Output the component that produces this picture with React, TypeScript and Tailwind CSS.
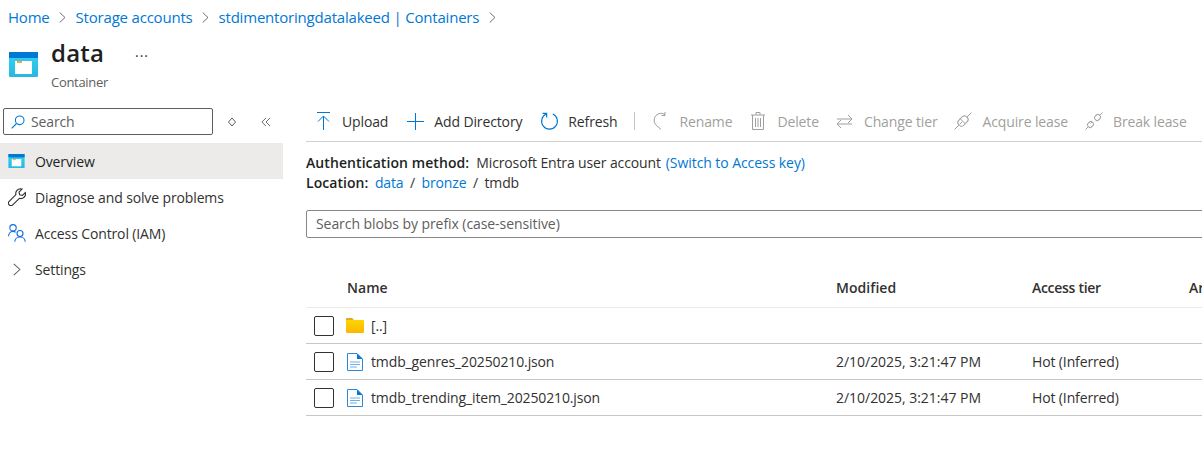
import type { ReactNode } from 'react'

const navLink = 'text-[#0078d4]'
const grey = '#a19f9d'

function ContainerIcon({ width, height, id }: { width: number; height: number; id: string }) {
  return (
    <svg width={width} height={height} viewBox="0 0 29 25" aria-hidden="true">
      <defs>
        <linearGradient id={id} x1="0" y1="0" x2="0" y2="1">
          <stop offset="0" stopColor="#32d4f5" />
          <stop offset="1" stopColor="#28b8e0" />
        </linearGradient>
      </defs>
      <rect x="0" y="0" width="29" height="25" rx="1" fill={`url(#${id})`} />
      <rect x="0" y="0" width="29" height="6" fill="#0078d4" />
      <rect x="6" y="9" width="17" height="13" fill="#ffffff" />
      <rect x="8" y="9" width="5" height="2" fill="#f7a440" />
    </svg>
  )
}

function Chevron({ width = 7, height = 11 }: { width?: number; height?: number }) {
  return (
    <svg width={width} height={height} viewBox="0 0 7 11" fill="none" stroke="#605e5c" strokeWidth="0.9" aria-hidden="true">
      <path d="M.7.5l5.300 5-5.300 5" />
    </svg>
  )
}

function WrenchIcon() {
  return (
    <svg width="18" height="18" viewBox="0 0 18 18" fill="none" stroke="#323130" strokeWidth="1.1" aria-hidden="true">
      <path d="M12.500.8a4.700 4.700 0 0 0-4.600 5.900L1.200 13.300a2.500 2.500 0 0 0 3.500 3.600l6.700-6.600a4.700 4.700 0 0 0 6-5.700l-3 2.900-2.700-.8-.7-2.600 3-3a4.700 4.700 0 0 0-1.500-.1z" />
    </svg>
  )
}

function PeopleIcon() {
  return (
    <svg width="18" height="18" viewBox="0 0 18 18" fill="none" stroke="#0f6cdf" strokeWidth="1.1" aria-hidden="true">
      <circle cx="5" cy="3.800" r="3.200" />
      <path d="M.6 12.200c0-2.600 1.800-4.800 4.400-4.800 1 0 1.900.3 2.600.8" />
      <circle cx="12" cy="9.500" r="3" />
      <path d="M6.800 17.800c0-2.700 2.200-4.800 5.200-4.800s5.200 2.100 5.200 4.800" />
    </svg>
  )
}

function ToolButton({ icon, label, disabled }: { icon: ReactNode; label: string; disabled?: boolean }) {
  return (
    <div className={`flex items-center gap-[9px] ${disabled ? 'text-[#a19f9d]' : 'text-[#323130]'}`}>
      <span className="flex h-[20px] w-[20px] items-center justify-center">{icon}</span>
      <span>{label}</span>
    </div>
  )
}

function FileIcon() {
  return (
    <svg width="16" height="18" viewBox="0 0 16 18" aria-hidden="true">
      <path d="M.5.5h9.500l5.500 5.500v11.500H.5z" fill="#ffffff" stroke="#2b88d8" />
      <path d="M10 .5l5.500 5.500H10z" fill="#0078d4" />
      <path d="M3 9h10M3 11.500h10M3 14h7" stroke="#6fb0e6" strokeWidth="1" />
    </svg>
  )
}

function FolderIcon() {
  return (
    <svg width="18" height="15" viewBox="0 0 18 15" aria-hidden="true">
      <defs>
        <linearGradient id="folderFill" x1="0" y1="0" x2="0" y2="1">
          <stop offset="0" stopColor="#ffd400" />
          <stop offset="1" stopColor="#fbb800" />
        </linearGradient>
      </defs>
      <path d="M0 1.200C0 .5.500 0 1.200 0h5l2 2.500H0z" fill="#dca92c" />
      <rect x="0" y="2" width="18" height="13" rx="1" fill="url(#folderFill)" />
    </svg>
  )
}

const rows = [
  { name: '[..]', folder: true, modified: '', tier: '' },
  { name: 'tmdb_genres_20250210.json', folder: false, modified: '2/10/2025, 3:21:47 PM', tier: 'Hot (Inferred)' },
  { name: 'tmdb_trending_item_20250210.json', folder: false, modified: '2/10/2025, 3:21:47 PM', tier: 'Hot (Inferred)' },
]

export default function App() {
  return (
    <div className="h-[462px] w-[1202px] overflow-hidden bg-white font-['Open_Sans',sans-serif] text-[14px] tracking-[-0.13px] text-[#323130]">
      {/* breadcrumb */}
      <div className="flex h-[35px] items-center gap-[9.500px] pl-[8px] text-[15px] tracking-[-0.2px]">
        <span className={navLink}>Home</span>
        <Chevron />
        <span className={navLink}>Storage accounts</span>
        <Chevron />
        <span className={navLink}>stdimentoringdatalakeed | Containers</span>
        <Chevron />
      </div>

      {/* title */}
      <div className="flex h-[61px] items-start pl-[9px]">
        <div className="mt-[17px]">
          <ContainerIcon width={29} height={25} id="containerLarge" />
        </div>
        <div className="ml-[13px]">
          <div className="text-[24px] font-semibold leading-[36px] tracking-[0.2px] text-[#201f1e]">data</div>
          <div className="text-[13px] leading-[22px] tracking-[-0.3px] text-[#605e5c]">Container</div>
        </div>
        <div className="ml-[27px] mt-[1px] text-[14px] leading-[32px] tracking-[1px] text-[#323130]">...</div>
      </div>

      <div className="flex">
        {/* sidebar */}
        <div className="w-[283px] shrink-0">
          <div className="flex h-[47px] items-start pl-[3px] pt-[12px]">
            <div className="flex h-[27px] w-[210px] items-center gap-[6px] rounded-[2px] border border-[#605e5c] pl-[7px] text-[#605e5c]">
              <svg width="14" height="14" viewBox="0 0 14 14" fill="none" stroke="#0078d4" strokeWidth="1.1" aria-hidden="true">
                <circle cx="8.700" cy="5.300" r="4.300" />
                <path d="M5.500 8.500L.7 13.300" />
              </svg>
              <span>Search</span>
            </div>
            <svg className="ml-[14px] mt-[9px]" width="10" height="10" viewBox="0 0 10 10" fill="none" stroke="#605e5c" aria-hidden="true">
              <path d="M5 1l3.500 4L5 9 1.500 5z" />
            </svg>
            <svg className="ml-[24px] mt-[9px]" width="10" height="10" viewBox="0 0 11 10" fill="none" stroke="#605e5c" aria-hidden="true">
              <path d="M5.500.5L1 5l4.500 4.500M10 .5L5.500 5l4.500 4.500" />
            </svg>
          </div>
          <div className="flex h-[36px] items-center gap-[9px] bg-[#edebe9] pl-[8px] text-[#201f1e]">
            <span className="flex w-[18px]">
              <ContainerIcon width={17} height={14} id="containerSmall" />
            </span>
            <span>Overview</span>
          </div>
          <div className="flex h-[36px] items-center gap-[9px] pl-[8px]">
            <WrenchIcon />
            <span>Diagnose and solve problems</span>
          </div>
          <div className="flex h-[36px] items-center gap-[9px] pl-[8px]">
            <PeopleIcon />
            <span>Access Control (IAM)</span>
          </div>
          <div className="flex h-[36px] items-center gap-[9px] pl-[8px]">
            <span className="flex w-[18px] justify-center">
              <Chevron width={8} height={13} />
            </span>
            <span>Settings</span>
          </div>
        </div>

        {/* main */}
        <div className="min-w-0 flex-1 pl-[23px]">
          <div className="flex h-[46px] items-center border-b border-[#d2d0ce] pl-[7px] pt-[5px]">
            <div className="flex items-center gap-[17px]">
              <ToolButton
                label="Upload"
                icon={
                  <svg width="13" height="18" viewBox="0 0 13 18" fill="none" stroke="#0078d4" aria-hidden="true">
                    <path d="M0 .5h13M6.500 18V4M1 9.500L6.500 4 12 9.500" />
                  </svg>
                }
              />
              <ToolButton
                label="Add Directory"
                icon={
                  <svg width="17" height="17" viewBox="0 0 17 17" fill="none" stroke="#0078d4" aria-hidden="true">
                    <path d="M8.500 0v17M0 8.500h17" />
                  </svg>
                }
              />
              <ToolButton
                label="Refresh"
                icon={
                  <svg width="19" height="19" viewBox="0 0 20 20" fill="none" stroke="#0078d4" strokeWidth="1.2" aria-hidden="true">
                    <path d="M6.500 2.200a8.300 8.300 0 1 0 7 0M2.700 1.500h4.300v4.300" />
                  </svg>
                }
              />
            </div>
            <div className="ml-[16px] mr-[16px] h-[18px] w-px bg-[#c8c6c4]" />
            <div className="flex items-center gap-[16px]">
              <ToolButton
                disabled
                label="Rename"
                icon={
                  <svg width="16" height="18" viewBox="0 0 16 18" fill="none" stroke={grey} aria-hidden="true">
                    <path d="M12 2.500A7 7 0 0 0 2.500 12.500L8 17.500M12 0v3.500H8.500" />
                  </svg>
                }
              />
              <ToolButton
                disabled
                label="Delete"
                icon={
                  <svg width="14" height="18" viewBox="0 0 14 18" fill="none" stroke={grey} aria-hidden="true">
                    <path d="M0 3h14M5 3V.5h4V3M1.500 3v14.500h11V3M4.500 6v9M7 6v9M9.500 6v9" />
                  </svg>
                }
              />
              <ToolButton
                disabled
                label="Change tier"
                icon={
                  <svg width="17" height="17" viewBox="0 0 17 17" fill="none" stroke={grey} aria-hidden="true">
                    <path d="M1 6h15M12 2l4 4-4 4M16 11H1M5 7l-4 4 4 4" />
                  </svg>
                }
              />
              <ToolButton
                disabled
                label="Acquire lease"
                icon={
                  <svg width="18" height="18" viewBox="0 0 18 18" fill="none" stroke={grey} aria-hidden="true">
                    <path d="M.5 17.500l4.500-4.500M13 5l4.500-4.500M6 6.500l5.500 5.500M8 10l-2 2" />
                    <rect x="3.500" y="5.500" width="11" height="7" rx="3" transform="rotate(-45 9 9)" />
                  </svg>
                }
              />
              <ToolButton
                disabled
                label="Break lease"
                icon={
                  <svg width="18" height="18" viewBox="0 0 18 18" fill="none" stroke={grey} aria-hidden="true">
                    <path d="M.5 17.500l2.500-2.500M15 3l2.500-2.500M7 10l-1.500 1.500" />
                    <rect x="2.500" y="10" width="6" height="5" rx="2" transform="rotate(-45 5.500 12.500)" />
                    <rect x="9.500" y="3" width="6" height="5" rx="2" transform="rotate(-45 12.500 5.500)" />
                  </svg>
                }
              />
            </div>
          </div>

          <div className="mt-[11px] leading-[20px]">
            <div>
              <span className="font-semibold tracking-[0.08px] text-[#201f1e]">Authentication method:</span>
              <span className="ml-[7px]">Microsoft Entra user account</span>
              <span className={`ml-[5px] tracking-[-0.07px] ${navLink}`}>(Switch to Access key)</span>
            </div>
            <div className="flex gap-[6.500px]">
              <span className="font-semibold tracking-[0.05px] text-[#201f1e]">Location:</span>
              <span className={navLink}>data</span>
              <span>/</span>
              <span className={navLink}>bronze</span>
              <span>/</span>
              <span>tmdb</span>
            </div>
          </div>

          <div className="-mr-[2px] mt-[17px] flex h-[28px] items-center rounded-[2px] border border-[#8a8886] pb-[2px] pl-[9px] tracking-[-0.07px] text-[#605e5c]">
            Search blobs by prefix (case-sensitive)
          </div>

          <div className="mt-[31px]">
            <div className="flex h-[39px] items-center whitespace-nowrap border-b border-[#edebe9] pb-[2px] font-semibold tracking-[0.05px] text-[#323130]">
              <div className="w-[41px] shrink-0" />
              <div className="w-[489px] shrink-0">Name</div>
              <div className="w-[196px] shrink-0">Modified</div>
              <div className="w-[157px] shrink-0 tracking-[-0.3px]">Access tier</div>
              <div className="shrink-0">Archive</div>
            </div>
            {rows.map((row) => (
              <div key={row.name} className="flex h-[36px] items-center border-b border-[#c8c6c4]">
                <div className="flex w-[39px] items-center pl-[8px]">
                  <div className="h-[20px] w-[20px] rounded-[2px] border border-[#323130]" />
                </div>
                <div className={`flex w-[26px] items-center ${row.folder ? 'pl-[1px]' : 'pl-[2px]'}`}>
                  {row.folder ? <FolderIcon /> : <FileIcon />}
                </div>
                <div className="w-[465px]">{row.name}</div>
                <div className="w-[196px] tracking-[-0.03px]">{row.modified}</div>
                <div>{row.tier}</div>
              </div>
            ))}
          </div>
        </div>
      </div>
    </div>
  )
}
